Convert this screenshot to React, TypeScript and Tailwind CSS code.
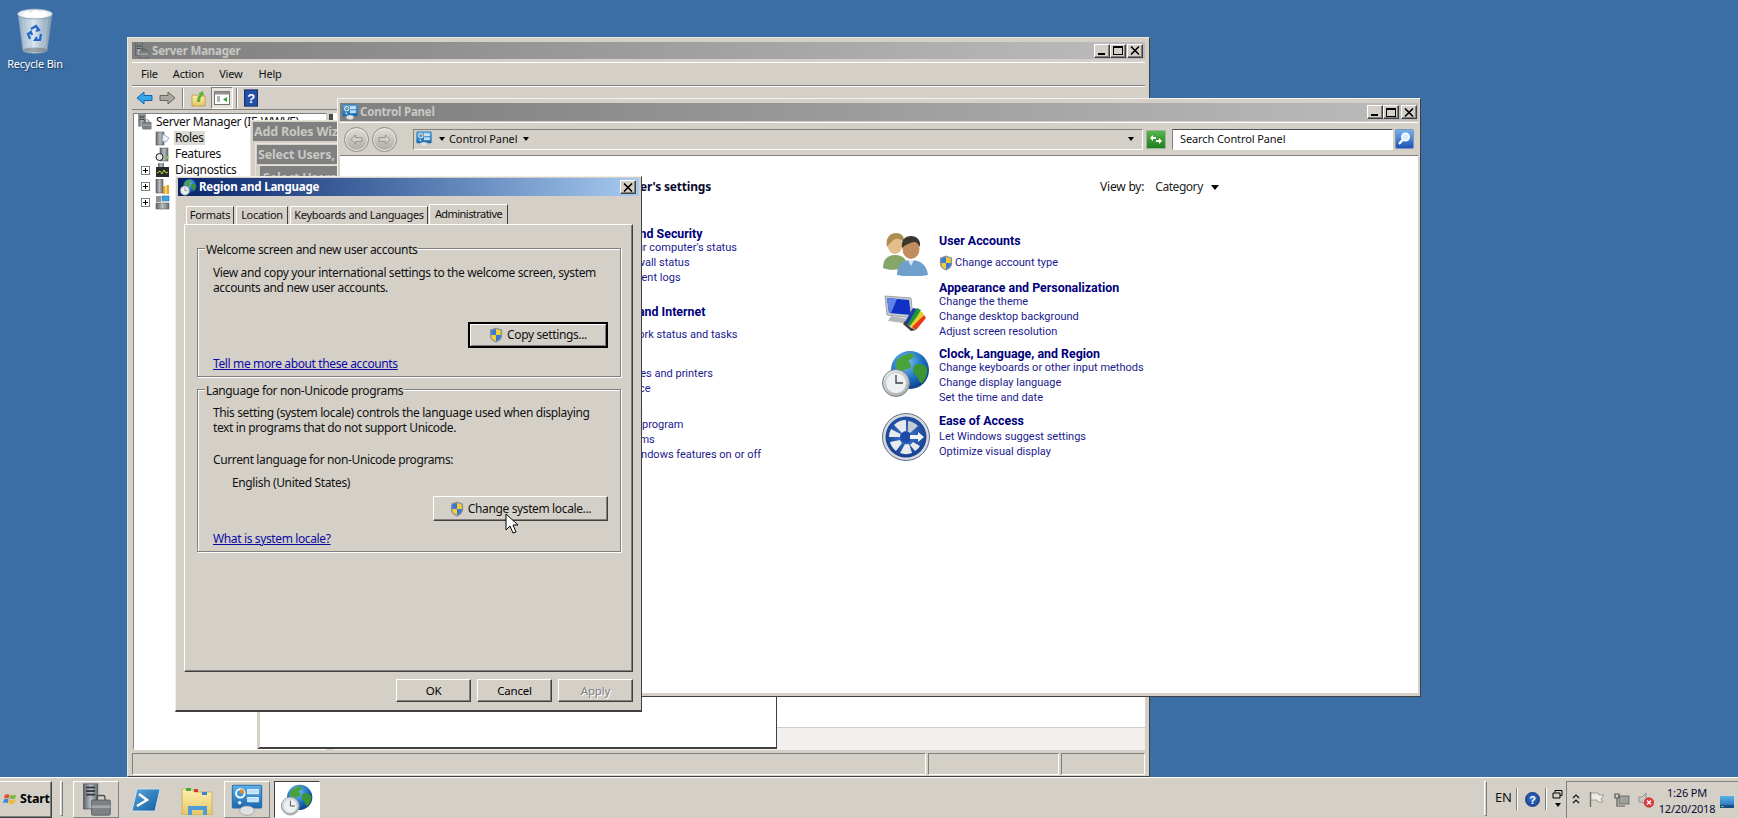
import React from "react";

const Defs = () => (
  <svg className="absolute w-0 h-0">
    <defs>
      <linearGradient id="gSteel" x1="0" y1="0" x2="1" y2="0"><stop offset="0" stopColor="#5f6468" /><stop offset="0.5" stopColor="#b9bec2" /><stop offset="1" stopColor="#666b70" /></linearGradient>
      <linearGradient id="gBin" x1="0" y1="0" x2="1" y2="0"><stop offset="0" stopColor="#8fa9c0" /><stop offset="0.45" stopColor="#dbe7f1" /><stop offset="1" stopColor="#7d97ae" /></linearGradient>
      <radialGradient id="gGlobe" cx="0.4" cy="0.3" r="0.8"><stop offset="0" stopColor="#7cc6f0" /><stop offset="0.55" stopColor="#1c6fc0" /><stop offset="1" stopColor="#0b2f7a" /></radialGradient>
      <radialGradient id="gClock" cx="0.4" cy="0.3" r="0.8"><stop offset="0" stopColor="#ffffff" /><stop offset="1" stopColor="#9ea6ab" /></radialGradient>
      <linearGradient id="gPanel" x1="0" y1="0" x2="0" y2="1"><stop offset="0" stopColor="#5cb2e8" /><stop offset="1" stopColor="#1a66ad" /></linearGradient>
      <linearGradient id="gGreen" x1="0" y1="0" x2="0" y2="1"><stop offset="0" stopColor="#58b84e" /><stop offset="1" stopColor="#1a7d1f" /></linearGradient>
      <linearGradient id="gSearch" x1="0" y1="0" x2="0" y2="1"><stop offset="0" stopColor="#79b4ee" /><stop offset="1" stopColor="#1d4fb5" /></linearGradient>
      <linearGradient id="gFolder" x1="0" y1="0" x2="0" y2="1"><stop offset="0" stopColor="#fdf0b0" /><stop offset="1" stopColor="#e8c565" /></linearGradient>
      <radialGradient id="gEase" cx="0.5" cy="0.45" r="0.6"><stop offset="0" stopColor="#3f79cf" /><stop offset="1" stopColor="#123a8c" /></radialGradient>
      <linearGradient id="gPS" x1="0" y1="0" x2="1" y2="1"><stop offset="0" stopColor="#58a7de" /><stop offset="1" stopColor="#135b9e" /></linearGradient>
    </defs>
  </svg>
);

const Shield = ({ className = "" }: { className?: string }) => (
  <svg viewBox="0 0 14 17" className={className}>
    <path d="M7 .5 13.500 3v6c0 3.600-2.800 6-6.500 7.500C3.300 15 .5 12.600 .5 9V3Z" fill="#8c9298" />
    <path d="M7 2 7 8.500H2V3.800Z" fill="#3a78d8" />
    <path d="M7 2 12 3.800V8.500H7Z" fill="#f6cf33" />
    <path d="M2 8.500H7V15C4 13.800 2 12 2 9Z" fill="#f6cf33" />
    <path d="M7 8.500H12V9C12 12 10 13.800 7 15Z" fill="#3a78d8" />
  </svg>
);

const GlobeClock = ({ className = "" }: { className?: string }) => (
  <svg viewBox="0 0 48 48" className={className}>
    <circle cx="28" cy="20" r="19" fill="url(#gGlobe)" />
    <path d="M16 9c4-4 11-6 15-5 2 2-1 5-4 6-1 3 3 3 2 7-2 3-6 1-8 4-3 1-6-1-7-4-1-3 0-6 2-8Z" fill="#4aa33a" />
    <path d="M33 15c4-2 9-1 12 3 1 5-1 11-5 15-3 0-3-4-5-6-1-3-4-3-4-7 0-2 1-4 2-5Z" fill="#3c9530" />
    <circle cx="14" cy="33" r="13.500" fill="url(#gClock)" stroke="#7b8388" strokeWidth="1" />
    <circle cx="14" cy="33" r="10.500" fill="#eef1f2" stroke="#b0b6ba" strokeWidth=".7" />
    <path d="M14 25v8h7" fill="none" stroke="#3a3f44" strokeWidth="1.300" />
  </svg>
);

const CPIcon = ({ className = "" }: { className?: string }) => (
  <svg viewBox="0 0 24 24" className={className}>
    <rect x="1" y="1" width="22" height="17" rx="1" fill="url(#gPanel)" stroke="#2c6da8" strokeWidth=".8" />
    <circle cx="7" cy="7" r="3.200" fill="none" stroke="#fff" strokeWidth="1.400" />
    <path d="M7 3.800A3.200 3.200 0 0 1 10.200 7H7Z" fill="#f08a24" />
    <circle cx="6.500" cy="14" r="1.300" fill="#dff1fd" />
    <rect x="12.500" y="4" width="8" height="3.400" fill="#bfe2fb" stroke="#fff" strokeWidth=".5" />
    <rect x="12.500" y="10" width="8" height="3.400" fill="#bfe2fb" stroke="#fff" strokeWidth=".5" />
    <ellipse cx="12" cy="20" rx="5.500" ry="3.500" fill="#dfe1e2" stroke="#9aa0a4" strokeWidth=".6" />
  </svg>
);

const ServerToolIcon = ({ className = "" }: { className?: string }) => (
  <svg viewBox="0 0 34 38" className={className}>
    <rect x="3" y="1" width="16" height="28" fill="url(#gSteel)" stroke="#4a4f53" strokeWidth=".8" />
    <rect x="6" y="4" width="10" height="2" fill="#33373b" />
    <rect x="6" y="8" width="10" height="2" fill="#33373b" />
    <rect x="6" y="12" width="10" height="2" fill="#33373b" />
    <rect x="12" y="19" width="21" height="17" rx="1.500" fill="#7e8286" stroke="#4a4e52" strokeWidth=".8" />
    <rect x="12" y="25" width="21" height="3" fill="#a4a8ab" />
    <path d="M18 19v-3a2 2 0 0 1 2-2h5a2 2 0 0 1 2 2v3" fill="none" stroke="#4a4e52" strokeWidth="1.500" />
  </svg>
);

const RecycleBin = () => (
  <svg viewBox="0 0 38 46" className="w-[38px] h-[46px]">
    <path d="M2 6 7 43c4 3 20 3 24 0L36 6Z" fill="url(#gBin)" stroke="#7f98ad" strokeWidth=".7" />
    <ellipse cx="19" cy="6" rx="17.500" ry="5" fill="#e8eef3" stroke="#8299ad" strokeWidth=".8" />
    <path d="M6 7l4-4 5 2 4-3 5 2 5-1 3 4-6 3-8-1-7 1Z" fill="#fff" />
    <path d="M7 12l3 26M31 12l-3 26M14 11l1 29M24 11l-1 29" stroke="#b9cad8" strokeWidth=".8" fill="none" />
    <path d="M15 21l5-3 3 4-3 1M25 26l-1 6-5 0 2-3M14 31l-2-5 3-2 1 3" fill="none" stroke="#2467c8" strokeWidth="2.200" />
    <ellipse cx="19" cy="42" rx="12" ry="2.500" fill="#6a6f73" opacity=".55" />
  </svg>
);

const UsersIcon = () => (
  <svg viewBox="0 0 46 43" className="w-[46px] h-[43px] block">
    <path d="M1 35c0-8 4-13 12-13s12 4 12 12c-6 3-18 4-24 1Z" fill="#86a76a" />
    <ellipse cx="13" cy="12" rx="7.500" ry="9" fill="#e5bd8a" />
    <path d="M5 14C3 4 9 0 14 0c6 0 9 4 8 10-2-3-5-5-9-4-3 2-5 4-8 8Z" fill="#ac8e4e" />
    <path d="M15 42c0-10 5-15 14-15s16 5 17 15c-9 2-22 2-31 0Z" fill="#6f9fcb" />
    <ellipse cx="29" cy="16" rx="8.500" ry="10" fill="#c28d5e" />
    <path d="M20 15c-1-8 3-12 9-12s10 4 9 11c-2-3-3-5-6-5-4 1-8 2-12 6Z" fill="#3b352f" />
    <path d="M26 27l3 6 3-6Z" fill="#dfe9f2" />
  </svg>
);

const AppearanceIcon = () => (
  <svg viewBox="0 0 44 37" className="w-[44px] h-[37px] block">
    <path d="M2 2 28 4 30 24 4 21Z" fill="#c6cbd0" stroke="#8a9096" strokeWidth=".8" />
    <path d="M4 4 26 6 28 21 6 19Z" fill="#1130c4" />
    <path d="M4 4 14 5 8 19 6 19Z" fill="#5f83ea" />
    <path d="M8 22 26 25 28 30 5 27Z" fill="#b4b8bd" />
    <path d="M22 28 30 14 35 15 27 32Z" fill="#1c3ca8" />
    <path d="M25 30 34 14 38 16 29 33Z" fill="#1f9a36" />
    <path d="M27 32 38 17 41 20 31 35Z" fill="#e7cf27" />
    <path d="M29 33 41 21 43 24 33 36Z" fill="#e63a1f" />
    <path d="M22 27 27 33 33 36 28 37 20 30Z" fill="#3b3f44" />
  </svg>
);

const EaseIcon = () => (
  <svg viewBox="0 0 48 50" className="w-[48px] h-[52px] block">
    <circle cx="24" cy="25" r="23.500" fill="#d8dadd" stroke="#3a4f7a" strokeWidth=".8" />
    <circle cx="24" cy="25" r="20.500" fill="url(#gEase)" />
    <path d="M24 8a17 17 0 0 0-12 5l8 8a6 6 0 0 1 4-2ZM9 17a17 17 0 0 0-2 8h11a6 6 0 0 1 .5-3ZM8 30a17 17 0 0 0 6 9l6-8a6 6 0 0 1-2-3ZM18 41a17 17 0 0 0 12 0l-3-9a6 6 0 0 1-4 0ZM33 39a17 17 0 0 0 5-5l-7-4-3 3Z" fill="#e6e9ee" />
    <path d="M26 9a17 17 0 0 1 10 5l-8 7a6 6 0 0 0-2-1Z" fill="#c5ccd6" />
    <circle cx="24" cy="25" r="5.500" fill="#1b4aa8" />
    <path d="M28 23h8v-3l6 5-6 5v-3h-8Z" fill="#f3f4f6" />
  </svg>
);

const BackArrow = ({ flip = false, gray = false }: { flip?: boolean; gray?: boolean }) => (
  <svg viewBox="0 0 17 14" className={flip ? "w-[17px] h-[14px] -scale-x-100" : "w-[17px] h-[14px]"}>
    <path d="M8 1 1 7l7 6V9.500h8v-5H8Z" fill={gray ? "#a9a79f" : "#36a5ec"} stroke={gray ? "#67655f" : "#1266ab"} strokeWidth="1" />
  </svg>
);

const NavBall = ({ flip = false }: { flip?: boolean }) => (
  <div className="w-[25px] h-[25px] rounded-full bg-gradient-to-b from-[#e0ded8] to-[#aeaca6] border border-[#8e8c86] flex items-center justify-center shadow-[inset_0_0_0_1px_#ecebe6]">
    <svg viewBox="0 0 14 12" className={flip ? "w-[13px] h-[11px] -scale-x-100" : "w-[13px] h-[11px]"}>
      <path d="M6 1 1 6l5 5V8h7V4H6Z" fill="#d4d2cc" stroke="#8f8d87" strokeWidth="1" />
    </svg>
  </div>
);

const Caret = ({ className = "" }: { className?: string }) => (
  <span className={"inline-block w-0 h-0 border-x-[3.5px] border-x-transparent border-t-[4px] border-t-black " + className} />
);

const CaptionButton = ({ kind }: { kind: "min" | "max" | "close" }) => (
  <div className="w-[16px] h-[14px] bg-[#d4d0c8] border border-t-white border-l-white border-r-[#404040] border-b-[#404040] shadow-[inset_-1px_-1px_0_#808080] flex items-center justify-center">
    {kind === "min" && <div className="w-[7px] h-[2px] bg-black mt-[6px] -ml-[1px]" />}
    {kind === "max" && <div className="w-[10px] h-[9px] border border-black border-t-2" />}
    {kind === "close" && (
      <svg viewBox="0 0 10 9" className="w-[10px] h-[9px]">
        <path d="M1 .5 9 8.500M9 .5 1 8.500" stroke="#000" strokeWidth="1.600" />
      </svg>
    )}
  </div>
);

const raised = "bg-[#d4d0c8] border border-t-white border-l-white border-r-[#404040] border-b-[#404040] shadow-[inset_-1px_-1px_0_#808080]";

const PushButton = ({ label, w, h, disabled = false }: { label: string; w: string; h: string; disabled?: boolean }) => (
  <div className={`${raised} ${w} ${h} flex items-center justify-center ${disabled ? "text-[#808080] [text-shadow:1px_1px_0_#fff]" : "text-black"}`}>
    {label}
  </div>
);

const ToolSep = ({ className = "" }: { className?: string }) => (
  <div className={"w-[2px] h-[20px] border-l border-[#808080] border-r border-r-white " + className} />
);

const Legend = ({ text }: { text: string }) => (
  <div className="-mt-[6px] -ml-[8px] w-fit h-[14px] leading-[14px] px-[1px] bg-[#d4d0c8]">{text}</div>
);

const groupBox = "w-[424px] border border-[#808080] shadow-[1px_1px_0_#fff,inset_1px_1px_0_#fff] pl-[15px] tracking-[-0.37px]";

const linkClass = "block h-[14px] leading-[14px] whitespace-nowrap text-[#1a1a8e]";
const headClass = "block h-[14px] leading-[14px] whitespace-nowrap font-bold text-[#00007c] text-[12.4px]";
const titleClass = "font-bold text-[11.5px] whitespace-nowrap";
const wizardTitle = "font-bold text-[12.5px] whitespace-nowrap bg-[#808080] text-[#c8c8c4] overflow-hidden";

const Desktop = () => (
  <div className="relative flex-1">
    <div className="absolute left-[8px] top-[8px] w-[54px] flex flex-col items-center text-white">
      <RecycleBin />
      <div className="mt-[3px] leading-[14px] text-[11px] whitespace-nowrap [text-shadow:1px_1px_1px_#1c3a5c]">Recycle Bin</div>
    </div>

    {/* Server Manager */}
    <div className="absolute left-[127px] top-[37px] w-[1023px] h-[740px] bg-[#d4d0c8] border border-t-[#e8e4da] border-l-[#e8e4da] border-r-[#404040] border-b-[#404040] pt-[4px] px-[4px] flex flex-col">
      <div className="h-[17px] shrink-0 bg-gradient-to-r from-[#7f7f7f] to-[#bcbcbc] flex items-center pl-[2px] pr-[2px]">
        <ServerToolIcon className="w-[15px] h-[16px]" />
        <span className={"ml-[3px] text-[#c8c8c4] " + titleClass}>Server Manager</span>
        <div className="ml-auto flex">
          <CaptionButton kind="min" />
          <CaptionButton kind="max" />
          <div className="ml-[1px]"><CaptionButton kind="close" /></div>
        </div>
      </div>
      <div className="mt-[3px] h-[24px] shrink-0 border-t border-white border-b border-b-[#808080] flex items-center text-[11px]">
        <span className="ml-[9px]">File</span>
        <span className="ml-[15px]">Action</span>
        <span className="ml-[15px]">View</span>
        <span className="ml-[16px]">Help</span>
      </div>
      <div className="h-[24px] shrink-0 border-t border-white border-b border-b-[#808080] flex items-center">
        <div className="ml-[4px]"><BackArrow /></div>
        <div className="ml-[6px]"><BackArrow flip gray /></div>
        <ToolSep className="ml-[6px]" />
        <svg viewBox="0 0 15 17" className="ml-[7px] w-[15px] h-[17px]">
          <path d="M1 5h4l1 1h8v10H1Z" fill="url(#gFolder)" stroke="#b8963f" strokeWidth=".8" />
          <path d="M6 12c0-4 1-6 3-7L7 4l5-3 1 5-2-1c-1 2-2 4-2 7Z" fill="#58b52c" />
        </svg>
        <div className="ml-[5px] w-[22px] h-[22px] bg-[#e6e3dc] border border-t-[#808080] border-l-[#808080] border-r-white border-b-white flex items-center justify-center">
          <svg viewBox="0 0 16 14" className="w-[16px] h-[14px]">
            <rect x=".5" y=".5" width="15" height="13" fill="#fff" stroke="#737373" />
            <rect x=".5" y=".5" width="15" height="3" fill="#8f8f8f" />
            <path d="M3 6h3M3 8h3M3 10h3" stroke="#666" />
            <path d="M13 6 9 8.500 13 11Z" fill="#2da52d" />
          </svg>
        </div>
        <ToolSep className="ml-[3px]" />
        <svg viewBox="0 0 13 16" className="ml-[6px] w-[14px] h-[18px]">
          <rect x=".5" y=".5" width="12" height="15" fill="#2451a8" stroke="#15306e" />
          <text x="6.500" y="12.500" textAnchor="middle" fill="#fff" fontSize="12" fontWeight="700" fontFamily="Liberation Sans, sans-serif">?</text>
        </svg>
      </div>
      <div className="flex-1 mt-[3px] flex min-h-0">
        <div className="w-[194px] ml-[1px] bg-white border border-t-[#808080] border-l-[#808080] border-r-[#d4d0c8] border-b-white tracking-[-0.35px]">
          <div className="flex items-center h-[16px] ml-[3px]">
            <ServerToolIcon className="w-[15px] h-[16px]" />
            <span className="ml-[4px] whitespace-nowrap">Server Manager (IE-WWVE)</span>
          </div>
          <TreeItem label="Roles" icon="roles" selected />
          <TreeItem label="Features" icon="features" />
          <TreeItem label="Diagnostics" icon="diag" plus />
          <TreeItem label="Configuration" icon="config" plus />
          <TreeItem label="Storage" icon="storage" plus />
        </div>
        <div className="w-[6px] bg-[#d4d0c8] pt-[1px] pl-[2px]"><div className="w-[4px] h-[7px] bg-[#4a4a48]" /></div>
        <div className="flex-1 bg-white flex flex-col">
          <div className="flex-1" />
          <div className="h-[23px] bg-[#f1f0ec] border-t border-[#cfcdc6]" />
        </div>
      </div>
      <div className="h-[22px] shrink-0 mt-[3px] mb-[1px] flex">
        <div className="flex-1 border border-t-[#808080] border-l-[#808080] border-r-white border-b-white" />
        <div className="w-[131px] ml-[2px] border border-t-[#808080] border-l-[#808080] border-r-white border-b-white" />
        <div className="w-[84px] ml-[2px] border border-t-[#808080] border-l-[#808080] border-r-white border-b-white" />
      </div>
    </div>

    {/* wizard cascade behind Control Panel */}
    <div className="absolute left-[250px] top-[120px] w-[300px] h-[300px] bg-[#d4d0c8] border border-t-[#e8e4da] border-l-[#e8e4da] px-[2px] pt-[1px]">
      <div className={"h-[19px] leading-[19px] pl-[1px] " + wizardTitle}>Add Roles Wizard</div>
    </div>
    <div className="absolute left-[255px] top-[143px] w-[300px] h-[300px] bg-[#d4d0c8] border border-t-[#e8e4da] border-l-[#e8e4da] px-[1px] pt-[1px]">
      <div className={"h-[19px] leading-[19px] pl-[1px] " + wizardTitle}>Select Users, Computers</div>
    </div>
    <div className="absolute left-[257px] top-[165px] w-[520px] h-[584px] bg-white border border-t-[#e8e4da] border-l-[#d4d0c8] border-l-3 border-r-[#404040] border-b-2 border-b-[#404040]">
      <div className={"h-[19px] pl-[3px] pt-[5px] leading-[14px] " + wizardTitle}>Select Users</div>
    </div>

    {/* Control Panel */}
    <div className="absolute left-[337px] top-[98px] w-[1084px] h-[599px] bg-[#d4d0c8] border border-t-[#f4f2ec] border-l-[#f4f2ec] border-r-[#404040] border-b-[#404040] pt-[4px] px-[2px] flex flex-col">
      <div className="h-[18px] shrink-0 bg-gradient-to-r from-[#7f7f7f] to-[#bcbcbc] flex items-center pl-[2px] pr-[1px]">
        <CPIcon className="w-[16px] h-[16px]" />
        <span className={"ml-[2px] text-[#c8c8c4] " + titleClass}>Control Panel</span>
        <div className="ml-auto flex">
          <CaptionButton kind="min" />
          <CaptionButton kind="max" />
          <div className="ml-[2px]"><CaptionButton kind="close" /></div>
        </div>
      </div>
      <div className="mt-[1px] h-[34px] shrink-0 border-t border-white border-b border-b-[#808080] flex items-center pl-[4px] text-[11px] tracking-[-0.1px]">
        <NavBall />
        <div className="ml-[3px]"><NavBall flip /></div>
        <div className="ml-[16px] w-[730px] h-[21px] border border-t-[#808080] border-l-[#808080] border-r-white border-b-white flex items-center pl-[2px]">
          <CPIcon className="w-[16px] h-[16px]" />
          <Caret className="ml-[7px]" />
          <span className="ml-[4px]">Control Panel</span>
          <Caret className="ml-[6px]" />
          <Caret className="ml-auto mr-[8px]" />
        </div>
        <svg viewBox="0 0 20 19" className="ml-[3px] w-[20px] h-[19px]">
          <rect x=".5" y=".5" width="19" height="18" rx="1" fill="url(#gGreen)" stroke="#9fb49b" />
          <path d="M4 8 7 5v2h3v2H7v2ZM16 11l-3 3v-2h-3v-2h3V8Z" fill="#fff" />
        </svg>
        <div className="ml-[6px] w-[221px] h-[21px] bg-white border border-t-[#505050] border-l-[#808080] border-r-white border-b-white flex items-center pl-[7px]">
          Search Control Panel
        </div>
        <svg viewBox="0 0 19 20" className="ml-[2px] w-[19px] h-[20px]">
          <rect x=".5" y=".5" width="18" height="19" rx="1.500" fill="url(#gSearch)" stroke="#7d95b8" />
          <circle cx="10.500" cy="8" r="3.700" fill="#d8ecff" stroke="#fff" strokeWidth="1.500" />
          <path d="M7.500 11 4 15" stroke="#fff" strokeWidth="2.200" />
        </svg>
      </div>
      <div className="flex-1 bg-white min-h-0 mb-[3px]">
        <div className="flex items-center h-[20px] mt-[21px]">
          <div className="w-[371px] shrink-0 text-right font-bold text-[#0a0a30] text-[12px] whitespace-nowrap">Adjust your computer's settings</div>
          <span className="ml-[389px]">View by:</span>
          <span className="ml-[11px] text-[#1f1f1f] tracking-[-0.45px]">Category</span>
          <Caret className="ml-[8px] border-x-[4px] border-t-[5px]" />
        </div>
        <div className="flex font-['Roboto',sans-serif] text-[11px] tracking-normal">
          <div className="w-[541px] shrink-0 pl-[248px] pt-[30px]">
            <div className={headClass}>System and Security</div>
            <a className={linkClass}>Review your computer's status</a>
            <a className={linkClass + " mt-[1px]"}>Check firewall status</a>
            <a className={linkClass + " mt-[1px] pl-[16px]"}>View event logs</a>
            <div className={headClass + " mt-[20px]"}>Network and Internet</div>
            <a className={linkClass + " mt-[9px]"}>View network status and tasks</a>
            <div className={headClass + " mt-[9px]"}>Hardware</div>
            <a className={linkClass + " mt-[2px]"}>View devices and printers</a>
            <a className={linkClass + " mt-[1px]"}>Add a device</a>
            <div className={headClass + " mt-[8px]"}>Programs</div>
            <a className={linkClass}>Uninstall a program</a>
            <a className={linkClass + " mt-[1px]"}>Get programs</a>
            <a className={linkClass + " mt-[1px] pl-[16px]"}>Turn Windows features on or off</a>
          </div>
          <div className="pt-[37px]">
            <div className="flex h-[47px]">
              <div className="w-[58px] h-0 shrink-0 -mt-[1px] ml-[1px] -mr-[1px]"><UsersIcon /></div>
              <div>
                <div className={headClass}>User Accounts</div>
                <div className="flex items-center h-[14px] mt-[8px] text-[#1a1a8e] whitespace-nowrap">
                  <Shield className="w-[14px] h-[16px] mr-[2px]" />
                  Change account type
                </div>
              </div>
            </div>
            <div className="flex h-[66px]">
              <div className="w-[58px] h-0 shrink-0 mt-[13px] ml-[2px] -mr-[2px]"><AppearanceIcon /></div>
              <div>
                <div className={headClass}>Appearance and Personalization</div>
                <a className={linkClass}>Change the theme</a>
                <a className={linkClass + " mt-[1px]"}>Change desktop background</a>
                <a className={linkClass + " mt-[1px]"}>Adjust screen resolution</a>
              </div>
            </div>
            <div className="flex h-[67px]">
              <div className="w-[58px] h-0 shrink-0 mt-[3px] ml-[1px] -mr-[1px]"><GlobeClock className="w-[48px] h-[48px] block" /></div>
              <div>
                <div className={headClass}>Clock, Language, and Region</div>
                <a className={linkClass}>Change keyboards or other input methods</a>
                <a className={linkClass + " mt-[1px]"}>Change display language</a>
                <a className={linkClass + " mt-[1px]"}>Set the time and date</a>
              </div>
            </div>
            <div className="flex">
              <div className="w-[58px] h-0 shrink-0 -mt-[3px] ml-[1px] -mr-[1px]"><EaseIcon /></div>
              <div>
                <div className={headClass}>Ease of Access</div>
                <a className={linkClass + " mt-[2px]"}>Let Windows suggest settings</a>
                <a className={linkClass + " mt-[1px]"}>Optimize visual display</a>
              </div>
            </div>
          </div>
        </div>
      </div>
    </div>

    {/* Region and Language dialog */}
    <div className="absolute left-[175px] top-[176px] w-[467px] h-[536px] bg-[#d4d0c8] border border-t-[#f0eee8] border-l-[#f0eee8] border-r-[#404040] border-b-2 border-b-[#404040] pt-[1px] px-[2px] flex flex-col">
      <div className="h-[18px] shrink-0 bg-gradient-to-r from-[#0a246a] to-[#a6caf0] flex items-center pl-[2px] pr-[3px]">
        <GlobeClock className="w-[17px] h-[17px]" />
        <span className={"ml-[2px] text-white " + titleClass}>Region and Language</span>
        <div className="ml-auto"><CaptionButton kind="close" /></div>
      </div>
      <div className="flex items-end h-[28px] shrink-0 pl-[8px] text-[11px] tracking-[-0.3px]">
        <Tab label="Formats" w="w-[48px]" />
        <Tab label="Location" w="w-[52px]" ml="ml-[2px]" />
        <Tab label="Keyboards and Languages" w="w-[138px]" ml="ml-[2px]" />
        <div className="ml-[1px] w-[79px] h-[21px] bg-[#d4d0c8] border-t border-l border-r border-t-white border-l-white border-r-[#404040] flex items-center justify-center -mb-[1px] pb-[1px] tracking-[-0.55px]">Administrative</div>
      </div>
      <div className="ml-[6px] w-[449px] h-[448px] shrink-0 border border-t-white border-l-white border-r-[#404040] border-b-[#404040] shadow-[inset_-1px_-1px_0_#808080] pl-[12px] pt-[23px]">
        <div className={groupBox + " h-[129px]"}>
          <Legend text="Welcome screen and new user accounts" />
          <div className="mt-[8px] leading-[15px] whitespace-nowrap">View and copy your international settings to the welcome screen, system<br />accounts and new user accounts.</div>
          <div className="mt-[27px] ml-[255px] w-[140px] h-[26px] border-2 border-black bg-[#d4d0c8] shadow-[inset_1px_1px_0_#fff,inset_-1px_-1px_0_#808080] flex items-center justify-center">
            <Shield className="w-[14px] h-[16px] mr-[4px]" />
            Copy settings...
          </div>
          <a className="block mt-[8px] h-[15px] leading-[15px] text-[#0a0aa4] underline underline-offset-1">Tell me more about these accounts</a>
        </div>
        <div className={groupBox + " h-[163px] mt-[12px]"}>
          <Legend text="Language for non-Unicode programs" />
          <div className="mt-[7px] leading-[15px] whitespace-nowrap">This setting (system locale) controls the language used when displaying<br />text in programs that do not support Unicode.</div>
          <div className="mt-[17px] h-[15px] leading-[15px]">Current language for non-Unicode programs:</div>
          <div className="mt-[8px] h-[15px] leading-[15px] ml-[19px]">English (United States)</div>
          <div className={raised + " mt-[6px] ml-[220px] w-[175px] h-[25px] flex items-center justify-center"}>
            <Shield className="w-[14px] h-[16px] mr-[4px]" />
            Change system locale...
          </div>
          <a className="block mt-[10px] h-[15px] leading-[15px] text-[#0a0aa4] underline underline-offset-1">What is system locale?</a>
        </div>
      </div>
      <div className="flex justify-end gap-[6px] mt-[7px] pr-[6px] text-[11.5px]">
        <PushButton label="OK" w="w-[75px]" h="h-[23px]" />
        <PushButton label="Cancel" w="w-[75px]" h="h-[23px]" />
        <PushButton label="Apply" w="w-[75px]" h="h-[23px]" disabled />
      </div>
    </div>

    {/* mouse pointer */}
    <svg viewBox="0 0 13 21" className="absolute left-[505px] top-[513px] w-[13px] h-[21px]">
      <path d="M1 1v16l4-4 3 7 3-1-3-7h5Z" fill="#fff" stroke="#000" strokeWidth="1" />
    </svg>
  </div>
);

const Tab = ({ label, w, ml = "" }: { label: string; w: string; ml?: string }) => (
  <div className={`${w} ${ml} h-[18px] bg-[#d4d0c8] border-t border-l border-r border-t-white border-l-white border-r-[#404040] flex items-center justify-center whitespace-nowrap`}>{label}</div>
);

const TreeGlyph = ({ icon }: { icon: string }) => {
  if (icon === "roles")
    return (
      <svg viewBox="0 0 15 15" className="w-[15px] h-[15px]">
        <rect x="1" y="1" width="8" height="13" fill="url(#gSteel)" stroke="#5a5f63" strokeWidth=".6" />
        <path d="M8 3l6 4-3 4-4-1Z" fill="#eef3f8" stroke="#7a8fb0" strokeWidth=".7" />
      </svg>
    );
  if (icon === "features")
    return (
      <svg viewBox="0 0 15 15" className="w-[15px] h-[15px]">
        <rect x="5" y="1" width="8" height="13" fill="url(#gSteel)" stroke="#5a5f63" strokeWidth=".6" />
        <circle cx="4.500" cy="10" r="3.500" fill="#e9e9e4" stroke="#222" strokeWidth="1" />
        <rect x="11.500" y="9" width="2" height="3" fill="#93c23b" />
      </svg>
    );
  if (icon === "diag")
    return (
      <svg viewBox="0 0 15 15" className="w-[15px] h-[15px]">
        <rect x="3" y="0" width="6" height="4" fill="url(#gSteel)" />
        <rect x="1" y="4" width="13" height="10" fill="#2a2a2a" />
        <path d="M2 10l3-2 2 3 2-4 2 3 2-1" fill="none" stroke="#b8d93a" strokeWidth="1" />
      </svg>
    );
  if (icon === "config")
    return (
      <svg viewBox="0 0 15 15" className="w-[15px] h-[15px]">
        <rect x="1" y="0" width="7" height="14" fill="url(#gSteel)" stroke="#5a5f63" strokeWidth=".6" />
        <rect x="8" y="7" width="2.500" height="8" fill="#e8a51e" />
        <rect x="11.500" y="6" width="2.500" height="9" fill="#e8a51e" />
      </svg>
    );
  return (
    <svg viewBox="0 0 15 15" className="w-[15px] h-[15px]">
      <rect x="1" y="8" width="13" height="6" fill="url(#gSteel)" stroke="#5a5f63" strokeWidth=".6" />
      <rect x="1" y="1" width="5" height="6" fill="#8e9396" />
      <rect x="7" y="1" width="7" height="5" fill="#3fa3dd" stroke="#256e9a" strokeWidth=".6" />
    </svg>
  );
};

const TreeItem = ({ label, icon, selected = false, plus = false }: { label: string; icon: string; selected?: boolean; plus?: boolean }) => (
  <div className="flex items-center h-[16px]">
    <div className="w-[21px] shrink-0 flex justify-center pl-[1px]">
      {plus && (
        <div className="w-[9px] h-[9px] border border-[#808080] flex items-center justify-center">
          <svg viewBox="0 0 7 7" className="w-[7px] h-[7px]"><path d="M1 3.500h5M3.500 1v5" stroke="#000" /></svg>
        </div>
      )}
    </div>
    <TreeGlyph icon={icon} />
    <span className={"ml-[4px] px-[1px] h-[14px] leading-[14px] " + (selected ? "bg-[#dcdad4]" : "")}>{label}</span>
  </div>
);

const TaskButton = ({ children, active = false, ml = "" }: { children: React.ReactNode; active?: boolean; ml?: string }) => (
  <div className={`${ml} w-[46px] h-[37px] flex items-center justify-center border ${active ? "bg-white border-t-[#404040] border-l-[#404040] border-r-white border-b-white" : "border-t-white border-l-white border-r-[#808080] border-b-[#808080]"}`}>
    {children}
  </div>
);

const Taskbar = () => (
  <div className="h-[41px] shrink-0 bg-[#d4d0c8] border-t border-white pt-[3px] flex items-start">
    <div className="w-[52px] h-[37px] flex items-center pl-[3px] border border-l-0 border-t-white border-r-[#404040] border-b-[#404040] shadow-[inset_-1px_-1px_0_#808080]">
      <svg viewBox="0 0 16 14" className="w-[15px] h-[13px] shrink-0">
        <path d="M2 2c2-1 4-1 5 0L6 6C5 5 3 5 1 6Z" fill="#e2512a" />
        <path d="M8 2c2 1 4 1 6 0l-1 4c-2 1-4 1-6 0Z" fill="#7db53a" />
        <path d="M1 7c2-1 4-1 5 0L5 11c-1-1-3-1-5 0Z" fill="#3a86d8" />
        <path d="M7 7c2 1 4 1 6 0l-1 4c-2 1-4 1-6 0Z" fill="#f0bb2a" />
      </svg>
      <span className="ml-[2px] font-bold text-black text-[12.5px]">Start</span>
    </div>
    <div className="ml-[8px] w-[3px] h-[35px] border-l border-t border-white border-r border-r-[#808080] border-b border-b-[#808080]" />
    <TaskButton ml="ml-[10px]"><ServerToolIcon className="w-[32px] h-[34px]" /></TaskButton>
    <svg viewBox="0 0 30 24" className="ml-[12px] mt-[7px] w-[30px] h-[24px]">
      <path d="M6 1h23L24 23H1Z" fill="url(#gPS)" stroke="#d9e9f6" strokeWidth=".8" />
      <path d="M8 6l8 6-10 6" fill="none" stroke="#fff" strokeWidth="2.500" />
    </svg>
    <svg viewBox="0 0 33 28" className="ml-[20px] mt-[6px] w-[33px] h-[28px]">
      <path d="M1 2h10l2 3h18v23H1Z" fill="url(#gFolder)" stroke="#c9a84a" strokeWidth=".8" />
      <rect x="5" y="1" width="5" height="3" fill="#45a83c" />
      <rect x="13" y="2" width="4" height="3" fill="#cf3b2b" />
      <rect x="21" y="5" width="5" height="3" fill="#3c84d0" />
      <path d="M7 28v-9h19v9h-4v-5H11v5Z" fill="#4f9bd6" />
    </svg>
    <TaskButton ml="ml-[10px]"><CPIcon className="w-[32px] h-[32px]" /></TaskButton>
    <TaskButton ml="ml-[4px]" active><GlobeClock className="w-[32px] h-[32px]" /></TaskButton>

    <div className="ml-auto flex items-start h-[37px]">
      <div className="w-[3px] h-[35px] border-l border-t border-white border-r border-r-[#808080] border-b border-b-[#808080]" />
      <span className="ml-[8px] w-[16px] mt-[8px] leading-[16px] text-[13px]">EN</span>
      <div className="ml-[5px] mt-[7px] w-[2px] h-[22px] border-l border-[#808080] border-r border-r-white" />
      <svg viewBox="0 0 15 15" className="ml-[7px] mt-[11px] w-[15px] h-[15px]">
        <circle cx="7.500" cy="7.500" r="7.200" fill="url(#gEase)" stroke="#0e2a70" strokeWidth=".5" />
        <text x="7.500" y="11.500" textAnchor="middle" fill="#fff" fontSize="11" fontWeight="700" fontFamily="Liberation Sans, sans-serif">?</text>
      </svg>
      <div className="ml-[5px] mt-[7px] w-[2px] h-[22px] border-l border-[#808080] border-r border-r-white" />
      <div className="ml-[5px] w-[11px] mt-[9px] flex flex-col items-center">
        <svg viewBox="0 0 11 9" className="w-[11px] h-[9px]"><path d="M3 2.500V.5h7v5H8M1 3h7v5H1Z" fill="none" stroke="#000" /></svg>
        <Caret className="mt-[4px]" />
      </div>
      <div className="ml-[3px] w-[172px] h-[37px] border-l border-t border-[#808080] flex items-start">
        <svg viewBox="0 0 8 10" className="ml-[5px] mt-[12px] w-[8px] h-[10px] shrink-0"><path d="M1 4l3-3 3 3M1 9l3-3 3 3" fill="none" stroke="#111" strokeWidth="1.200" /></svg>
        <svg viewBox="0 0 16 15" className="ml-[9px] mt-[10px] w-[16px] h-[15px] shrink-0">
          <path d="M1.500 0v15" stroke="#6f6f6a" strokeWidth="1.400" />
          <path d="M2 1h7l1 2h5l-3 4 2 3H9L8 8H2Z" fill="#ecebe6" stroke="#85847e" strokeWidth=".7" />
        </svg>
        <svg viewBox="0 0 16 16" className="ml-[9px] mt-[10px] w-[16px] h-[16px] shrink-0">
          <rect x="5" y="4" width="10" height="8" fill="#9ea29d" stroke="#555" strokeWidth=".7" />
          <path d="M1 2h4v4H1ZM3 6v8h8" fill="none" stroke="#555" strokeWidth="1.200" />
        </svg>
        <svg viewBox="0 0 16 16" className="ml-[8px] mt-[10px] w-[16px] h-[16px] shrink-0">
          <path d="M1 5h3l4-4v12L4 10H1Z" fill="#c9c8c2" stroke="#7d7c76" strokeWidth=".7" />
          <circle cx="11" cy="10.500" r="4.800" fill="#e13c3c" stroke="#a52020" strokeWidth=".5" />
          <path d="M9 8.500l4 4M13 8.500l-4 4" stroke="#fff" strokeWidth="1.300" />
        </svg>
        <div className="ml-[3px] w-[60px] shrink-0 text-center leading-[16px] mt-[3px] text-[11px] whitespace-nowrap text-[#0a0a30]">
          1:26 PM<br />12/20/2018
        </div>
        <svg viewBox="0 0 14 12" className="ml-[3px] mt-[14px] w-[14px] h-[12px] shrink-0">
          <rect width="14" height="12" fill="url(#gPanel)" />
          <rect y="9" width="14" height="3" fill="#1c4c84" />
          <rect x="1" y="10" width="3" height="1" fill="#65c15a" />
        </svg>
      </div>
    </div>
  </div>
);

export default function App() {
  return (
    <div className="relative w-[1738px] h-[818px] overflow-hidden bg-[#3a6ea5] flex flex-col font-['Noto_Sans','Open_Sans',sans-serif] text-[12px] text-[#111] tracking-[-0.2px]">
      <Defs />
      <Desktop />
      <Taskbar />
    </div>
  );
}
